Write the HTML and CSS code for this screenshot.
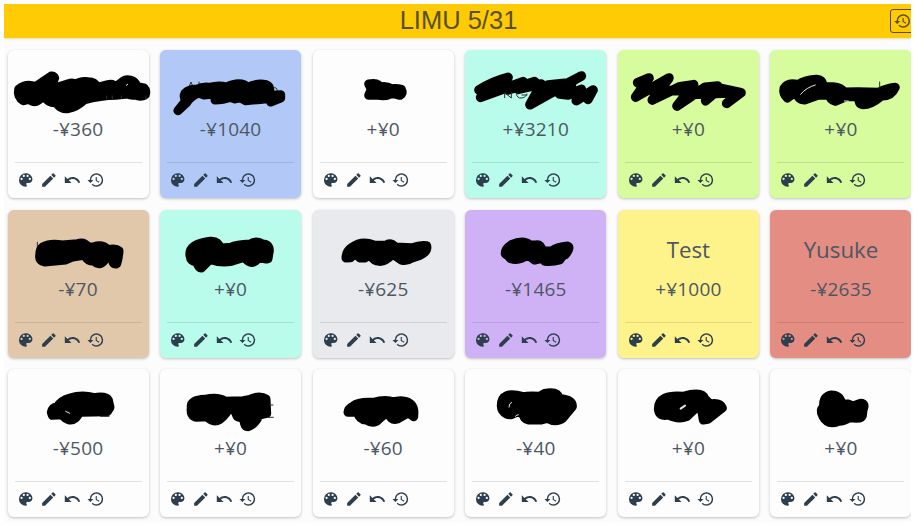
FILE: index.html
```
<!DOCTYPE html>
<html lang="en">
<head>
<meta charset="utf-8">
<title>LIMU 5/31</title>
<link rel="stylesheet" href="styles.css">
</head>
<body>
<svg class="defs" aria-hidden="true">
  <symbol id="palette" viewBox="0 0 24 24"><path d="M12 3a9 9 0 0 0 0 18c.83 0 1.5-.67 1.5-1.5 0-.39-.15-.74-.39-1.01-.23-.26-.38-.61-.38-.99 0-.83.67-1.5 1.5-1.5H16c2.76 0 5-2.24 5-5 0-4.42-4.03-8-9-8zm-5.5 9a1.5 1.5 0 1 1 0-3 1.5 1.5 0 0 1 0 3zm3-4a1.5 1.5 0 1 1 0-3 1.5 1.5 0 0 1 0 3zm5 0a1.5 1.5 0 1 1 0-3 1.5 1.5 0 0 1 0 3zm3 4a1.5 1.5 0 1 1 0-3 1.5 1.5 0 0 1 0 3z"/></symbol>
  <symbol id="pencil" viewBox="0 0 24 24"><path d="M3 17.25V21h3.75L17.81 9.94l-3.75-3.75L3 17.25zM20.71 7.04a1 1 0 0 0 0-1.41l-2.34-2.34a1 1 0 0 0-1.41 0l-1.83 1.83 3.75 3.75 1.83-1.83z"/></symbol>
  <symbol id="undo" viewBox="0 0 24 24"><path d="M12.5 8c-2.65 0-5.05.99-6.9 2.6L2 7v9h9l-3.62-3.62c1.39-1.16 3.16-1.88 5.12-1.88 3.54 0 6.55 2.31 7.6 5.5l2.37-.78C21.08 11.03 17.15 8 12.5 8z"/></symbol>
  <symbol id="history" viewBox="0 0 24 24"><path d="M13 3a9 9 0 0 0-9 9H1l3.89 3.89.07.14L9 12H6c0-3.87 3.13-7 7-7s7 3.13 7 7-3.13 7-7 7c-1.93 0-3.68-.79-4.94-2.06l-1.42 1.42A8.95 8.95 0 0 0 13 21a9 9 0 0 0 0-18zm-1 5v5l4.28 2.54.72-1.21-3.5-2.08V8H12z"/></symbol>
  <symbol id="tools" viewBox="0 0 88 18" preserveAspectRatio="xMinYMin meet">
    <use href="#palette" x="0" y="0" width="18" height="18"/>
    <use href="#pencil" x="23.2" y="0" width="18" height="18"/>
    <use href="#undo" x="46.6" y="0" width="18" height="18"/>
    <use href="#history" x="70" y="0" width="18" height="18"/>
  </symbol>
</svg>
<div class="app">
  <header class="bar">
    <h1 class="title">LIMU 5/31</h1>
    <div class="history-button"><svg class="icon"><use href="#history"/></svg></div>
  </header>
  <main class="grid">
    <article class="card">
      <div class="name"><svg class="ink" viewBox="22 150 423 198"><path d="M54 268A30 30 0 0 0 68 302A40 40 0 0 0 85 296A20 20 0 0 0 108 304L132 288A30 30 0 0 0 168 307A30 30 0 0 0 205 325Q225 322 250 300Q300 286 345 286L380 282A40 40 0 0 0 405 285A30 30 0 0 0 434 284A20 20 0 0 0 430 264L409 260A28 28 0 0 0 362 248L345 260A20 20 0 0 0 322 254L290 262A30 30 0 0 0 262 245Q240 242 225 253A20 20 0 0 0 205 251L160 265Q152 250 162 234A9 9 0 0 0 152 228L104 260A50 50 0 0 0 54 268Z"/><path class="thin" d="M318 296v-8M335 296v-8M362 296v-8M436 298v-10"/><path class="gap" d="M377 256l4-3"/></svg></div>
      <p class="amount">-¥360</p><svg class="tools"><use href="#tools"/></svg>
    </article>
    <article class="card blue">
      <div class="name"><svg class="ink" viewBox="480 150 423 198"><path class="thin" d="M568 258l5-12 5 12M597 256v-10M820 264q10-5 12 9v6"/><path d="M534 332L558 302A20 20 0 0 1 555 280Q568 266 590 268Q610 258 630 262Q655 254 680 261Q710 246 733 254L742 263Q770 248 798 254Q812 260 808 275L818 286L842 284L842 294L812 306Q808 296 800 296Q765 300 736 302L720 293L705 297L690 292Q670 300 645 300Q648 288 665 280L612 285L595 279Q572 288 560 308Z"/></svg></div>
      <p class="amount">-¥1040</p><svg class="tools"><use href="#tools"/></svg>
    </article>
    <article class="card">
      <div class="name"><svg class="ink" viewBox="23 30 423 198"><path d="M190 132Q210 128 218 134L222 142Q240 136 260 146Q275 144 288 148Q294 160 284 166L262 160Q240 170 220 166L190 166L198 148Z"/></svg></div>
      <p class="amount">+¥0</p><svg class="tools"><use href="#tools"/></svg>
    </article>
    <article class="card mint">
      <div class="name"><svg class="ink" viewBox="481 30 423 198"><path class="brush" d="M523 150Q560 125 610 112L528 172L655 125L610 150L690 125L640 148L710 132L676 194L830 108L720 165L800 135L765 162L790 165L830 148L815 182L865 150L850 178M540 145L660 138M700 150L850 160M730 135L780 130"/><path class="thin" d="M600 173V158L620 174V158M667 162q-6 14-22 12q-14-6-7-16M652 165h15"/></svg></div>
      <p class="amount">+¥3210</p><svg class="tools"><use href="#tools"/></svg>
    </article>
    <article class="card lime">
      <div class="name"><svg class="ink" viewBox="39 150 423 198"><path class="brush" d="M98 248L132 234L92 291L192 234L142 300L225 260L266 254L216 318L300 262L338 258L302 302L345 265L408 278L365 310M112 270L230 272M240 284L385 278"/></svg></div>
      <p class="amount">+¥0</p><svg class="tools"><use href="#tools"/></svg>
    </article>
    <article class="card lime">
      <div class="name"><svg class="ink" viewBox="496 150 423 198"><path d="M538 265Q534 280 548 294L575 275Q580 300 600 300L640 286L677 285Q674 300 692 304L725 290L762 290Q760 314 775 314Q800 314 830 288Q860 290 872 262Q850 264 820 277L760 275L718 276Q710 262 685 260L655 260Q655 235 632 238Q600 240 580 254Q550 245 538 265Z"/><path class="thin" d="M825 264v-18"/><path class="gap" d="M588 283Q605 262 632 255M719 303h12"/></svg></div>
      <p class="amount">+¥0</p><svg class="tools"><use href="#tools"/></svg>
    </article>

    <article class="card tan">
      <div class="name"><svg class="ink" viewBox="22 28 423 198"><path class="thin" d="M110 140v-15"/><path d="M117 165Q115 182 132 184L155 182L195 178L212 170L252 163Q260 182 280 182Q297 198 312 178L322 160L337 168Q332 192 348 190Q354 170 355 150Q345 142 323 147Q305 130 280 138L262 139Q250 122 230 129L185 133Q150 126 128 138Q117 145 117 165Z"/></svg></div>
      <p class="amount">-¥70</p><svg class="tools"><use href="#tools"/></svg>
    </article>
    <article class="card mint">
      <div class="name"><svg class="ink" viewBox="480 28 423 198"><path d="M570 165Q572 184 590 182Q595 202 604 202L630 176Q660 188 695 182L733 170Q750 192 765 182L785 164Q790 178 804 174L808 150Q808 130 788 130Q770 118 750 130Q710 132 692 140L660 143Q655 120 630 122Q565 130 570 165Z"/></svg></div>
      <p class="amount">+¥0</p><svg class="tools"><use href="#tools"/></svg>
    </article>
    <article class="card gray">
      <div class="name"><svg class="ink" viewBox="23 28 423 198"><path d="M122 172L136 171L152 154L163 172L178 172L195 163Q205 182 222 182Q240 184 262 160L288 178Q305 182 320 172Q370 160 364 135Q345 132 320 141L270 139Q255 124 242 134L205 133Q170 118 140 140Q122 152 122 172Z"/></svg></div>
      <p class="amount">-¥625</p><svg class="tools"><use href="#tools"/></svg>
    </article>
    <article class="card purple">
      <div class="name"><svg class="ink" viewBox="481 28 423 198"><path d="M602 160Q610 165 618 174Q645 182 668 162L690 178L715 172L720 182Q745 184 765 178Q772 165 782 162Q800 140 788 136Q760 138 740 151L712 150Q710 130 694 133L675 132Q655 116 620 132Q600 145 602 160Z"/></svg></div>
      <p class="amount">-¥1465</p><svg class="tools"><use href="#tools"/></svg>
    </article>
    <article class="card yellow">
      <h2 class="name">Test</h2>
      <p class="amount">+¥1000</p><svg class="tools"><use href="#tools"/></svg>
    </article>
    <article class="card red">
      <h2 class="name">Yusuke</h2>
      <p class="amount">-¥2635</p><svg class="tools"><use href="#tools"/></svg>
    </article>

    <article class="card">
      <div class="name"><svg class="ink" viewBox="22 15 423 198"><path d="M152 145L155 154L184 152Q205 178 225 162Q235 148 240 145L320 143L328 130L323 108Q315 95 280 101Q245 90 208 102Q180 110 170 128Q155 130 152 145Z"/><path class="brush" d="M180 140L230 145"/><path class="thin" d="M300 157h25"/><path class="gap" d="M195 142l12 6"/></svg></div>
      <p class="amount">-¥500</p><svg class="tools"><use href="#tools"/></svg>
    </article>
    <article class="card">
      <div class="name"><svg class="ink" viewBox="480 15 423 198"><path d="M574 130Q570 158 590 160L620 158Q640 178 660 166Q680 150 695 120L712 158L732 164Q732 188 745 188Q765 180 778 153L800 148L798 105Q780 92 750 106L730 110L675 112Q655 98 615 106Q570 108 574 130Z"/><path class="thin" d="M810 123h9M805 160h15"/></svg></div>
      <p class="amount">+¥0</p><svg class="tools"><use href="#tools"/></svg>
    </article>
    <article class="card">
      <div class="name"><svg class="ink" viewBox="23 15 423 198"><path d="M128 145L157 145Q162 166 182 168Q205 182 220 166L248 142Q255 172 276 165L310 146L325 158Q330 120 300 112Q280 108 265 114Q240 104 205 115Q160 112 145 125Q128 134 128 145Z"/></svg></div>
      <p class="amount">-¥60</p><svg class="tools"><use href="#tools"/></svg>
    </article>
    <article class="card">
      <div class="name"><svg class="ink" viewBox="481 15 423 198"><path d="M590 125A26 26 0 0 0 635 144L655 148A20 20 0 0 0 672 168L710 168L727 163Q755 178 775 162L803 128Q805 106 765 104Q758 80 720 88L705 97Q675 94 655 98Q590 78 590 125Z"/><path class="gap" d="M613 129q0-12 8-14M632 157q5-6 9-5"/></svg></div>
      <p class="amount">-¥40</p><svg class="tools"><use href="#tools"/></svg>
    </article>
    <article class="card">
      <div class="name"><svg class="ink" viewBox="39 15 423 198"><path d="M160 135Q162 160 190 153Q220 168 245 158L275 130L290 138L295 168L308 166L352 132Q345 115 315 120L300 105Q292 80 235 97Q160 90 160 135Z"/><path class="gap wide" d="M227 134l13-9"/></svg></div>
      <p class="amount">+¥0</p><svg class="tools"><use href="#tools"/></svg>
    </article>
    <article class="card">
      <div class="name"><svg class="ink" viewBox="496 15 423 198"><path d="M657 128Q644 140 655 158Q670 185 702 172Q720 172 735 160Q768 168 773 155L775 138Q784 118 768 118L745 126L730 120L711 118Q705 93 680 93Q655 98 657 128Z"/></svg></div>
      <p class="amount">+¥0</p><svg class="tools"><use href="#tools"/></svg>
    </article>
  </main>
</div>
</body>
</html>
```
FILE: styles.css
```
* { box-sizing: border-box; }
body { margin: 0; padding: 4px; background: #fff; overflow: hidden; font-family: "Open Sans", "Noto Sans", sans-serif; color: #4d5763; }
.defs { display: none; }
.app { width: 907px; height: 518px; background: #fcfcfc; overflow: hidden; }
.bar { display: grid; grid-template-columns: 1fr auto 1fr; align-items: center; height: 34px; padding-left: 4px; background: #ffcb05; box-shadow: 0 1px 2px #d9c98099; }
.title { grid-column: 2; margin: -2px 0 0 -2px; font: 400 25.5px/34px "Liberation Sans", sans-serif; color: #57501c; }
.history-button { justify-self: end; width: 24px; height: 24px; margin-right: -3px; border: 1px solid #554914; border-radius: 3px; padding: 2px; color: #554914; }
.icon { display: block; width: 19px; height: 18px; fill: currentColor; }
.grid { display: grid; grid-template-columns: repeat(6, 141px); grid-auto-rows: 148px; gap: 11.5px 11.6px; padding: 12px 0 0 3.5px; }
.card { display: flex; flex-direction: column; border-radius: 6px; background: #fdfdfd; box-shadow: 0 1px 3px #0000003d; }
.blue { background: #b2c9f7; }
.mint { background: #bafceb; }
.lime { background: #d7fc9d; }
.tan { background: #e2c8aa; }
.gray { background: #e9eaed; }
.purple { background: #cfb2f5; }
.yellow { background: #fef28b; }
.red { background: #e38d83; }
.name { height: 66px; margin: 0; text-align: center; font-size: 22.3px; font-weight: 400; line-height: 80px; letter-spacing: 0; }
.ink { display: block; width: 141px; height: 66px; overflow: visible; fill: #000; stroke: #000; stroke-width: 27; stroke-linecap: round; stroke-linejoin: round; }
.ink .brush { fill: none; stroke-width: 29; }
.ink .thin { fill: none; stroke: #26332f; stroke-width: 3; }
.ink .gap { fill: none; stroke: #dfe8df; stroke-width: 3; }
.ink .wide { stroke-width: 6; }
.amount { height: 46px; margin: 0; text-align: center; font-size: 19px; line-height: 26px; letter-spacing: .2px; }
.tools { display: block; height: 36px; margin: 0 7px; padding: 8px 0 9px 1.7px; border-top: 1px solid #0000001c; fill: #2d3f4e; }
.tools use { width: 88px; height: 18px; }
```
